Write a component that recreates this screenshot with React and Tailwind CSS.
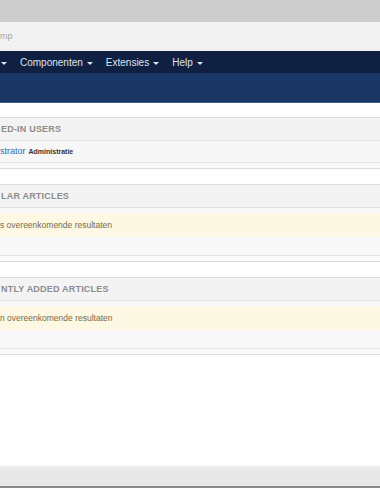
const font = { fontFamily: '"Liberation Sans", Arial, sans-serif' };

function Caret() {
  return (
    <span className="inline-block ml-[4px] w-0 h-0 border-l-[3px] border-r-[3px] border-t-[3px] border-l-transparent border-r-transparent border-t-[#dfe5ee] translate-y-[1px]" />
  );
}

function NavItem({ label }) {
  return (
    <div className="flex items-center text-[10px] text-[#dfe5ee]">
      <span>{label}</span>
      <Caret />
    </div>
  );
}

function Panel({ title, children }) {
  return (
    <div className="border-y border-[#dcdcdc]">
      <div className="h-[23px] flex items-center bg-[#f3f3f3] border-b border-[#e0e0e0] pl-[1px] pt-[1px] text-[9px] font-bold tracking-[0.2px] text-[#8c8c8c] uppercase">
        {title}
      </div>
      {children}
      <div className="h-[6px] bg-[#fafafa] border-t border-[#e2e2e2]" />
    </div>
  );
}

function Notice({ text }) {
  return (
    <div className="bg-[#f8f8f8] pt-[5px] pb-[18px]">
      <div className="h-[24px] flex items-center bg-[#fcf8e3] text-[8.5px] text-[#7d6a45]">
        {text}
      </div>
    </div>
  );
}

export default function App() {
  return (
    <div className="w-[380px] h-[488px] bg-white flex flex-col overflow-hidden" style={font}>
      <div className="h-[22px] bg-[#cdcdcd]" />
      <div className="h-[29px] bg-[#f2f2f2] flex items-center text-[9px] text-[#a3a3a3]">
        mp
      </div>
      <div className="h-[22px] bg-[#0f2043] flex items-center gap-[13px]">
        <div className="flex items-center -ml-[3px]">
          <Caret />
        </div>
        <NavItem label="Componenten" />
        <NavItem label="Extensies" />
        <NavItem label="Help" />
      </div>
      <div className="h-[30px] bg-[#1a3665] border-b border-[#3c5d8f]" />

      <div className="flex flex-col gap-[15px] mt-[14px]">
        <Panel title="ed-in users">
          <div className="h-[21px] flex items-center gap-[3px] pt-[1px] bg-[#f7f7f7]">
            <span className="text-[9px] text-[#2d6fae]">strator</span>
            <span className="text-[7px] font-bold text-[#333]">Administratie</span>
          </div>
        </Panel>
        <Panel title="lar articles">
          <Notice text="s overeenkomende resultaten" />
        </Panel>
        <Panel title="ntly added articles">
          <Notice text="n overeenkomende resultaten" />
        </Panel>
      </div>

      <div className="flex-1" />
      <div className="h-[23px] bg-[#e8e8e8] border-t-2 border-[#f4f4f4] border-b-2 border-b-[#8a8a8a]" />
    </div>
  );
}
